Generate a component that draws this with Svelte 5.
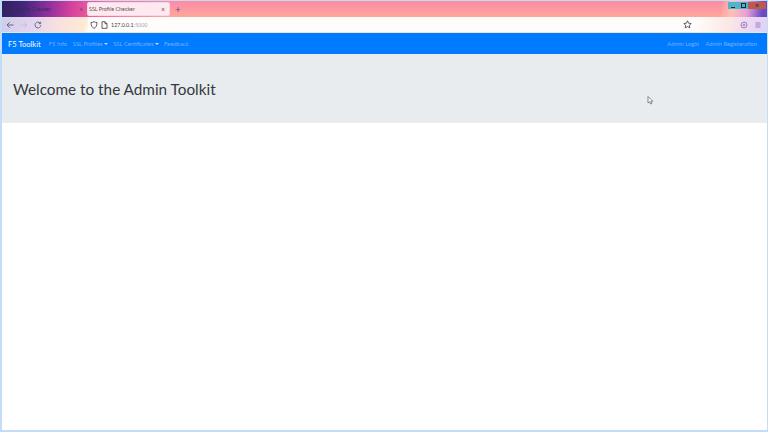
<script>
	const left = [
		{ label: 'F5 Info' },
		{ label: 'SSL Profiles', caret: true },
		{ label: 'SSL Certificates', caret: true },
		{ label: 'Feedback' }
	];
	const right = ['Admin Login', 'Admin Registeration'];
</script>

<div class="window">
	<header class="chrome">
		<div class="tabs">
			<div class="tab">
				<span class="tab-title">SSL Profile Checker</span>
				<span class="close">×</span>
			</div>
			<div class="tab active">
				<span class="tab-title">SSL Profile Checker</span>
				<span class="close">×</span>
			</div>
			<span class="plus">+</span>
			<div class="controls">
				<span class="ctl min"><i></i></span>
				<span class="ctl max"><i></i></span>
				<span class="ctl shut">×</span>
			</div>
		</div>
		<div class="toolbar">
			<div class="nav-btns">
				<svg width="8" height="8" viewBox="0 0 8 8"><path d="M7.5 4H1M3.8 1.2 1 4l2.8 2.8" /></svg>
				<svg class="off" width="8" height="8" viewBox="0 0 8 8"><path d="M.5 4H7M4.2 1.2 7 4 4.2 6.8" /></svg>
				<svg width="8" height="8" viewBox="0 0 8 8"><path d="M6.8 4.2A2.9 2.9 0 1 1 6 2M6.6.8v1.8H4.8" /></svg>
			</div>
			<div class="urlbar">
				<svg class="dark" width="8" height="8" viewBox="0 0 8 8"><path d="M4 .7c1 .6 2 .8 3 .8 0 3-1 5-3 5.900C2 6.500 1 4.500 1 1.500c1 0 2-.2 3-.8Z" /></svg>
				<svg class="dark page" width="7" height="8" viewBox="0 0 7 8"><path d="M1 .7h3L6 2.700v4.600H1ZM4 .7v2h2" /></svg>
				<span class="url">127.0.0.1<span class="port">:5000</span></span>
				<svg class="dark star" width="9" height="9" viewBox="0 0 9 9"><path d="m4.500.8 1.100 2.400 2.600.3-1.900 1.800.5 2.600-2.300-1.300-2.300 1.300.5-2.600L.8 3.500l2.600-.3Z" /></svg>
			</div>
			<div class="tools">
				<svg class="purple" width="8" height="8" viewBox="0 0 8 8"><circle cx="4" cy="4" r="3" /><circle cx="4" cy="4" r="1" /></svg>
				<svg class="purple" width="8" height="8" viewBox="0 0 8 8"><path d="M1.500 2h5M1.500 4h5M1.500 6h5" /></svg>
			</div>
		</div>
	</header>

	<nav class="navbar">
		<a class="brand" href="#top">F5 Toolkit</a>
		<ul class="links">
			{#each left as item}
				<li class:caret={item.caret}>{item.label}</li>
			{/each}
		</ul>
		<ul class="links end">
			{#each right as item}
				<li>{item}</li>
			{/each}
		</ul>
	</nav>

	<section class="jumbotron">
		<h1>Welcome to the Admin Toolkit</h1>
		<svg class="cursor" width="7" height="9" viewBox="0 0 7 9"><path d="M1 .5v6.500l1.600-1.300 1 2.300 1.200-.5-1-2.200h2Z" /></svg>
	</section>
</div>

<style>
	:global(body) {
		margin: 0;
		background: #fff;
	}
	.window {
		box-sizing: border-box;
		position: relative;
		height: 432px;
		overflow: hidden;
		display: flex;
		flex-direction: column;
		border: solid #c3dcf8;
		border-width: 1px 1px 2px 2px;
		font-family: Lato, 'Open Sans', sans-serif;
		background: #fff;
	}
	.chrome {
		height: 32px;
		background:
			linear-gradient(100deg, #2d2060 0, #46257e 3%, #8a2f9e 6%, #d23f9c 9%, #fb6aa0 13%, rgba(255, 140, 160, 0) 22%),
			linear-gradient(98deg, transparent 93.500%, #ffc0b4 95%, #e7a0d8 97%, #6a4ac4 99%),
			linear-gradient(180deg, #fe8ba4 0, #ffa79b 50%, #ffa89b 100%);
		display: flex;
		flex-direction: column;
	}
	.tabs {
		height: 17px;
		display: flex;
		align-items: center;
		position: relative;
	}
	.tab {
		box-sizing: border-box;
		width: 85px;
		height: 14px;
		display: flex;
		align-items: center;
		justify-content: space-between;
		padding: 0 4px 0 3px;
		font-size: 5.400px;
		color: #3a2b4a;
	}
	.tab.active {
		width: 83px;
		background: #ffe9ee;
		border: 1px solid #f6d7ea;
		border-radius: 2px;
		padding-left: 1px;
		color: #5c5060;
	}
	.close {
		font-size: 7px;
		line-height: 1;
		color: #5c5060;
	}
	.plus {
		margin-left: 5px;
		font-size: 10px;
		line-height: 1;
		color: #5b4aa0;
	}
	.controls {
		margin-left: auto;
		align-self: flex-start;
		margin-right: 1px;
		margin-top: 1px;
		display: flex;
		height: 7px;
	}
	.ctl {
		height: 7px;
		display: flex;
		align-items: center;
		justify-content: center;
		font-size: 7px;
		line-height: 1;
		color: #222;
	}
	.min,
	.max {
		width: 10px;
		background: #52b4cb;
	}
	.min i {
		display: block;
		width: 4px;
		height: 1px;
		margin-top: 3px;
		background: #223;
	}
	.max i {
		display: block;
		box-sizing: border-box;
		width: 5px;
		height: 5px;
		border: 1px solid #223;
	}
	.shut {
		width: 18px;
		background: #bd5a4e;
	}
	.toolbar {
		height: 15px;
		display: flex;
		align-items: center;
		background: linear-gradient(105deg, #cfcde6 0, #e2d4ee 4%, #fae2dc 8%, #ffe9d4 11%, #fff6ec 11.500%, #fffdfa 15%);
		position: relative;
		border-bottom: 1px solid #f0e3da;
	}
	.nav-btns {
		width: 86px;
		display: flex;
		gap: 6px;
		padding-left: 4px;
		box-sizing: border-box;
	}
	svg {
		fill: none;
		stroke: #5c5a88;
		stroke-width: 0.9;
		flex: none;
	}
	svg.off {
		stroke: #c9bcd8;
	}
	svg.dark {
		stroke: #4c4c55;
	}
	svg.purple {
		stroke: #9a72c0;
	}
	.urlbar {
		flex: 1;
		height: 15px;
		display: flex;
		align-items: center;
		padding: 0 4px 0 2px;
		background: #fffdfb;
		min-width: 0;
	}
	.page {
		margin-left: 3px;
	}
	.url {
		margin-left: 3px;
		font-size: 5.400px;
		color: #3f3f46;
	}
	.port {
		color: #a5a5ab;
	}
	.star {
		margin-left: auto;
	}
	.tools {
		width: 71px;
		box-sizing: border-box;
		display: flex;
		justify-content: flex-end;
		gap: 6px;
		padding-right: 5px;
		background: linear-gradient(100deg, #fffdfb 0, #fbe8e4 45%, #ecd8f2 75%, #dcd4f6 100%);
		height: 15px;
		align-items: center;
	}
	.navbar {
		height: 21px;
		flex: none;
		display: flex;
		align-items: center;
		background: #007bff;
		padding: 0 9px 0 6px;
	}
	.brand {
		font-size: 7.600px;
		color: #f4f9ff;
		text-decoration: none;
		margin-right: 8px;
	}
	.links {
		list-style: none;
		margin: 0;
		padding: 0;
		display: flex;
		gap: 5.500px;
		font-size: 5.900px;
		color: rgba(255, 255, 255, 0.42);
	}
	.end {
		margin-left: auto;
		margin-right: 1px;
		gap: 6.500px;
		font-size: 5.800px;
	}
	.caret::after {
		content: '';
		display: inline-block;
		margin-left: 1px;
		vertical-align: 1px;
		border: 2px solid transparent;
		border-top-color: rgba(255, 255, 255, 0.75);
		border-bottom-width: 0;
	}
	.jumbotron {
		height: 69px;
		flex: none;
		position: relative;
		display: flex;
		align-items: center;
		background: #e9ecef;
		padding: 0 11px;
	}
	h1 {
		margin: 0;
		font-size: 15.300px;
		font-weight: 400;
		color: #343a40;
		white-space: nowrap;
	}
	.cursor {
		position: absolute;
		left: 645px;
		top: 42px;
		fill: #fff;
		stroke: #6a6a70;
		stroke-width: 0.8;
	}
</style>
